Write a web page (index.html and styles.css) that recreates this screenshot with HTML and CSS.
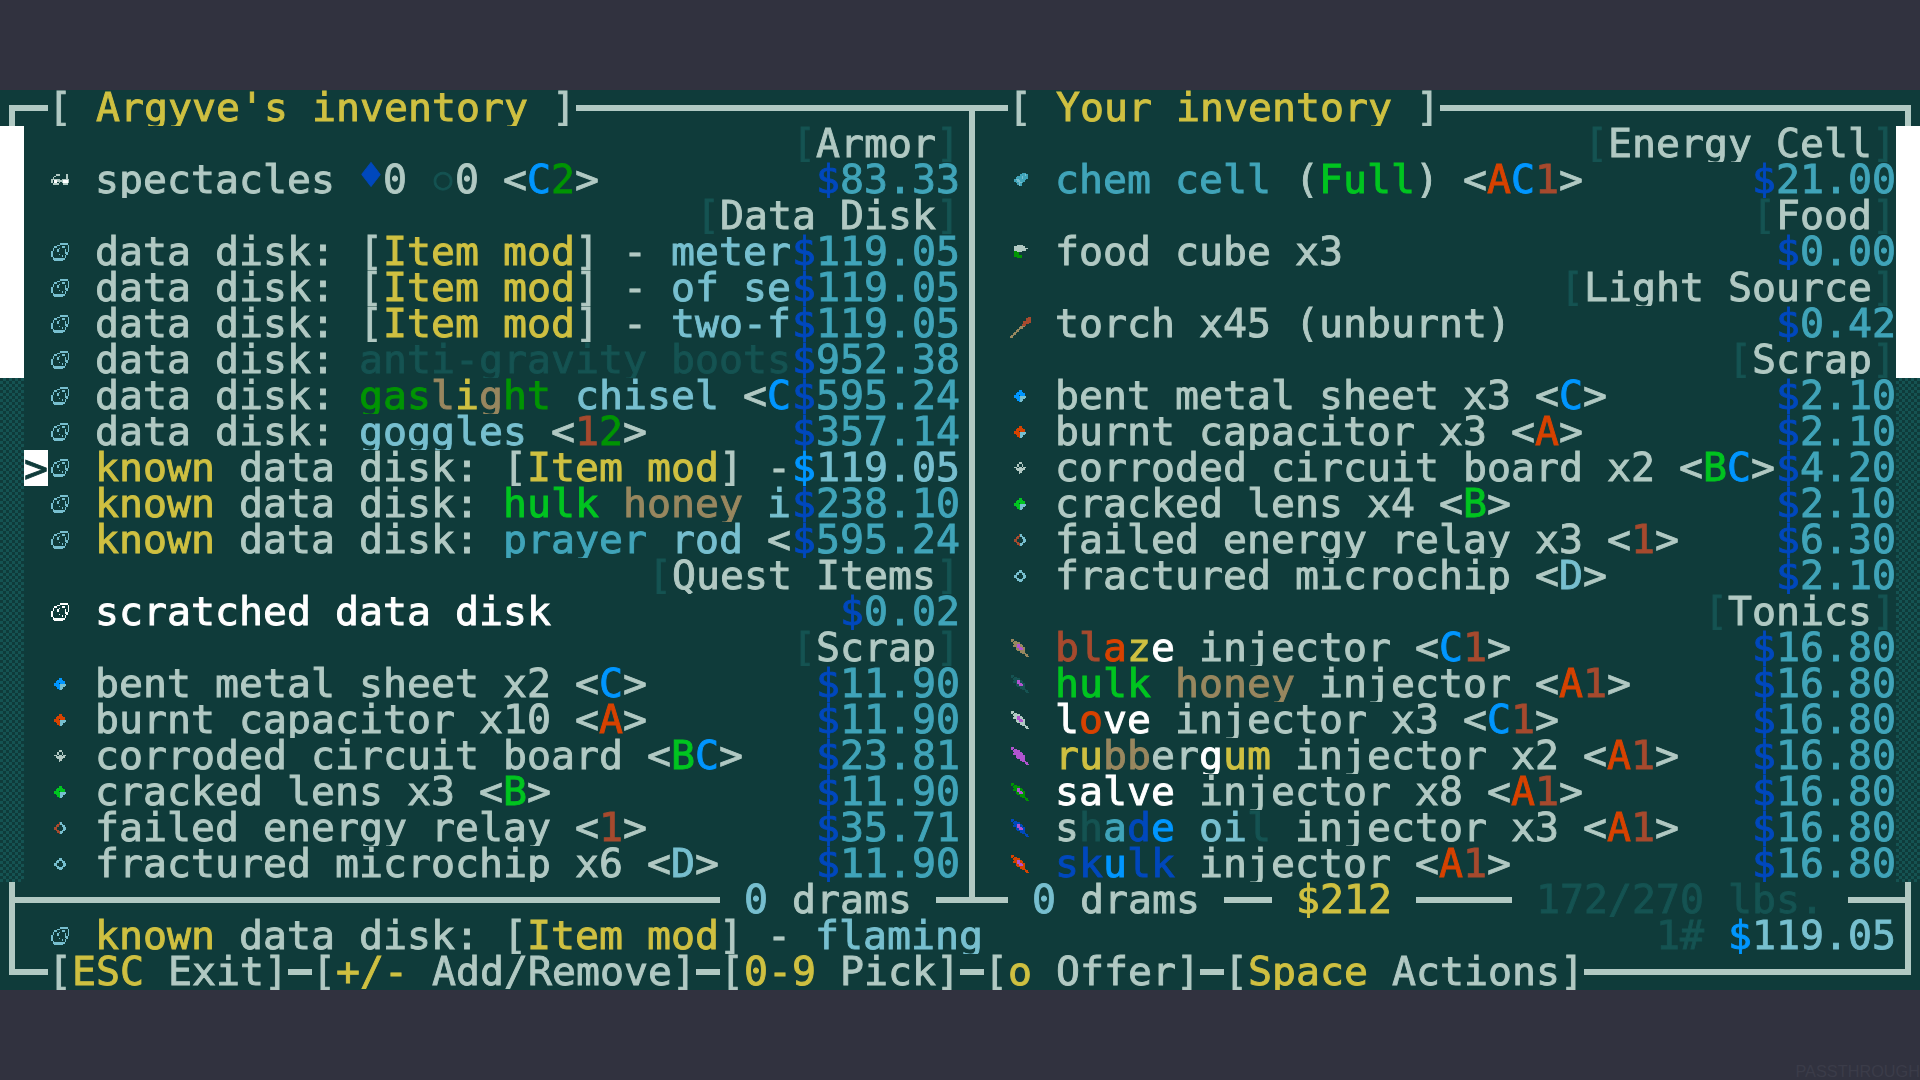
FILE: index.html
```html
<!DOCTYPE html>
<html lang="en">
<head>
    <meta charset="UTF-8">
    <title>Trade</title>
    <link rel="stylesheet" href="styles.css">
</head>
<body>
    <svg class="defs" width="0" height="0">
        <defs>
            <g id="specs">
                <path fill="#b1c9c3" d="M5 8h3v1H5z M12 8h1v3h-1z M4 9h1v1H4z M3 10h1v1H3z M2 11h6v1H2z M9 11h5v1H9z M2 12h1v2H2z M6 12h4v1H6z M13 12h1v2h-1z M7 13h1v1H7z M9 13h1v1H9z M3 14h4v1H3z M10 14h3v1h-3z"/>
                <path fill="#fff" d="M4 12h2v2H4z M10 12h3v2h-3z"/>
            </g>
            <path id="disk" fill="currentColor" d="M8 6h5v1H8z M6 7h2v1H6z M13 7h1v5h-1z M4 8h2v1H4z M9 8h2v1H9z M3 9h1v2H3z M7 9h1v1H7z M6 10h1v2H6z M11 10h1v3h-1z M12 12h1v2h-1z M2 11h1v4H2z M7 13h1v1H7z M9 14h1v1H9z M11 14h1v2h-1z M3 15h1v1H3z M3 16h8v1H3z M4 17h6v1H4z"/>
            <g id="chip">
                <path fill="currentColor" d="M7 8h2v1H7z M6 9h4v1H6z M5 10h6v1H5z M4 11h3v1H4z M8 11h3v1H8z M4 12h4v1H4z M5 13h3v1H5z M6 14h2v1H6z M7 15h1v1H7z"/>
                <path fill="#77bfcf" d="M8 12h4v1H8z M8 13h3v1H8z M8 14h2v1H8z M8 15h1v1H8z"/>
            </g>
            <g id="relay">
                <path fill="currentColor" d="M7 8h1v1H7z M6 9h2v1H6z M5 10h2v1H5z M4 11h2v2H4z M5 13h2v1H5z M6 14h2v1H6z M7 15h1v1H7z"/>
                <path fill="#77bfcf" d="M8 8h1v1H8z M8 9h2v1H8z M9 10h2v1H9z M10 11h2v2h-2z M9 13h2v1H9z M8 14h2v1H8z M8 15h1v1H8z"/>
            </g>
            <path id="circuit" fill="currentColor" d="M7 8h2v1H7z M6 9h1v2H6z M9 9h1v2H9z M7 11h2v1H7z M4 11h2v1H4z M10 11h2v1h-2z M5 12h2v1H5z M9 12h2v1H9z M7 12h2v3H7z M6 13h1v1H6z M9 13h1v1H9z M7 15h1v1H7z"/>
            <g id="cell">
                <path fill="#40a4b9" d="M9 7h3v1H9z M8 8h5v1H8z M6 9h7v1H6z M5 10h8v1H5z M4 11h8v1H4z M4 12h7v1H4z M5 13h5v1H5z M6 14h3v1H6z M7 15h2v1H7z"/>
                <path fill="#77bfcf" d="M5 11h2v1H5z M6 12h2v1H6z M7 13h2v1H7z M7 14h1v2H7z M9 9h1v2H9z M11 8h1v1h-1z"/>
            </g>
            <g id="food">
                <path fill="#b1c9c3" d="M6 7h4v1H6z M4 8h7v1H4z M4 9h9v1H4z M4 10h8v1H4z M6 11h3v1H6z"/>
                <path fill="#009403" d="M4 11h2v1H4z M4 12h3v2H4z M4 14h5v1H4z M6 15h3v1H6z"/>
            </g>
            <g id="torch">
                <path fill="#98875f" d="M1 20h2v1H1z M2 19h2v1H2z M3 18h2v1H3z M4 17h2v1H4z M5 16h2v1H5z M6 15h2v1H6z M7 14h3v1H7z M8 13h3v1H8z"/>
                <path fill="#a64a2e" d="M9 12h3v1H9z M10 11h4v1h-4z M10 10h5v1h-5z M12 9h3v1h-3z M12 8h3v1h-3z M13 7h2v1h-2z"/>
            </g>
            <g id="injector">
                <path fill="currentColor" d="M2 6h2v1H2z M2 7h1v1H2z M4 7h2v1H4z M3 8h5v1H3z M4 9h2v1H4z M8 9h1v1H8z M3 10h3v1H3z M8 10h2v1H8z M5 11h1v1H5z M9 11h2v1H9z M5 12h2v1H5z M10 12h1v1h-1z M6 13h5v1H6z M8 14h3v1H8z M9 15h3v1H9z M11 16h2v1h-2z M12 17h2v1h-2z"/>
                <path fill="#b154cf" d="M6 9h2v1H6z M6 10h2v1H6z M6 11h3v1H6z M7 12h3v1H7z"/>
            </g>
        </defs>
    </svg>

    <main class="screen">
        <div class="row">
            <i class="box tl"></i><i class="rule w1"></i>
            <div class="label">[ <span class="gold">Argyve's inventory</span> ]</div>
            <i class="rule w16"></i><i class="box tee"></i><i class="rule w1"></i>
            <div class="label">[ <span class="gold">Your inventory</span> ]</div>
            <i class="rule grow"></i><i class="box tr"></i>
        </div>

        <div class="panes">
            <div class="scroll"><div class="thumb"></div></div>

            <section class="list">
                <div class="row cat"><div class="label"><span class="dim">[</span>Armor<span class="dim">]</span></div></div>
                <div class="row"><i class="slot"></i><svg class="icon" viewBox="0 0 16 24"><use href="#specs"/></svg><div class="name">spectacles <span class="armor blue">♦</span>0 <span class="armor ring dim">○</span>0 &lt;<span class="sky">C</span><span class="green-d">2</span>&gt;</div><div class="price"><span class="blue">$</span>83.33</div></div>
                <div class="row cat"><div class="label"><span class="dim">[</span>Data Disk<span class="dim">]</span></div></div>
                <div class="row"><i class="slot"></i><svg class="icon cyan" viewBox="0 0 16 24"><use href="#disk"/></svg><div class="name">data disk: [<span class="gold">Item mod</span>] - <span class="cyan">meter</span></div><div class="price"><span class="blue">$</span>119.05</div></div>
                <div class="row"><i class="slot"></i><svg class="icon cyan" viewBox="0 0 16 24"><use href="#disk"/></svg><div class="name">data disk: [<span class="gold">Item mod</span>] - <span class="cyan">of se</span></div><div class="price"><span class="blue">$</span>119.05</div></div>
                <div class="row"><i class="slot"></i><svg class="icon cyan" viewBox="0 0 16 24"><use href="#disk"/></svg><div class="name">data disk: [<span class="gold">Item mod</span>] - <span class="cyan">two-f</span></div><div class="price"><span class="blue">$</span>119.05</div></div>
                <div class="row"><i class="slot"></i><svg class="icon cyan" viewBox="0 0 16 24"><use href="#disk"/></svg><div class="name">data disk: <span class="dim">anti-gravity boots</span></div><div class="price"><span class="blue">$</span>952.38</div></div>
                <div class="row"><i class="slot"></i><svg class="icon cyan" viewBox="0 0 16 24"><use href="#disk"/></svg><div class="name">data disk: <span class="green-d">gas</span><span class="tan">l</span><span class="gold">i</span><span class="tan">g</span><span class="green-d">ht</span> <span class="cyan">chisel</span> &lt;<span class="sky">C</span></div><div class="price"><span class="blue">$</span>595.24</div></div>
                <div class="row"><i class="slot"></i><svg class="icon cyan" viewBox="0 0 16 24"><use href="#disk"/></svg><div class="name">data disk: <span class="cyan">goggles</span> &lt;<span class="rust">1</span><span class="green-d">2</span>&gt;</div><div class="price"><span class="blue">$</span>357.14</div></div>
                <div class="row"><i class="slot cursor">&gt;</i><svg class="icon cyan" viewBox="0 0 16 24"><use href="#disk"/></svg><div class="name"><span class="gold">known</span> data disk: [<span class="gold">Item mod</span>] -</div><div class="price active"><span class="sky">$</span>119.05</div></div>
                <div class="row"><i class="slot"></i><svg class="icon cyan" viewBox="0 0 16 24"><use href="#disk"/></svg><div class="name"><span class="gold">known</span> data disk: <span class="green">hulk</span> <span class="tan">honey</span> <span class="cyan">i</span></div><div class="price"><span class="blue">$</span>238.10</div></div>
                <div class="row"><i class="slot"></i><svg class="icon cyan" viewBox="0 0 16 24"><use href="#disk"/></svg><div class="name"><span class="gold">known</span> data disk: <span class="teal">prayer</span> <span class="cyan">rod</span> &lt;</div><div class="price"><span class="blue">$</span>595.24</div></div>
                <div class="row cat"><div class="label"><span class="dim">[</span>Quest Items<span class="dim">]</span></div></div>
                <div class="row"><i class="slot"></i><svg class="icon white" viewBox="0 0 16 24"><use href="#disk"/></svg><div class="name white">scratched data disk</div><div class="price"><span class="blue">$</span>0.02</div></div>
                <div class="row cat"><div class="label"><span class="dim">[</span>Scrap<span class="dim">]</span></div></div>
                <div class="row"><i class="slot"></i><svg class="icon sky" viewBox="0 0 16 24"><use href="#chip"/></svg><div class="name">bent metal sheet x2 &lt;<span class="sky">C</span>&gt;</div><div class="price"><span class="blue">$</span>11.90</div></div>
                <div class="row"><i class="slot"></i><svg class="icon red" viewBox="0 0 16 24"><use href="#chip"/></svg><div class="name">burnt capacitor x10 &lt;<span class="red">A</span>&gt;</div><div class="price"><span class="blue">$</span>11.90</div></div>
                <div class="row"><i class="slot"></i><svg class="icon grey" viewBox="0 0 16 24"><use href="#circuit"/></svg><div class="name">corroded circuit board &lt;<span class="green">B</span><span class="sky">C</span>&gt;</div><div class="price"><span class="blue">$</span>23.81</div></div>
                <div class="row"><i class="slot"></i><svg class="icon green" viewBox="0 0 16 24"><use href="#chip"/></svg><div class="name">cracked lens x3 &lt;<span class="green">B</span>&gt;</div><div class="price"><span class="blue">$</span>11.90</div></div>
                <div class="row"><i class="slot"></i><svg class="icon rust" viewBox="0 0 16 24"><use href="#relay"/></svg><div class="name">failed energy relay &lt;<span class="rust">1</span>&gt;</div><div class="price"><span class="blue">$</span>35.71</div></div>
                <div class="row"><i class="slot"></i><svg class="icon cyan" viewBox="0 0 16 24"><use href="#relay"/></svg><div class="name">fractured microchip x6 &lt;<span class="cyan">D</span>&gt;</div><div class="price"><span class="blue">$</span>11.90</div></div>
            </section>

            <div class="divider"></div>

            <section class="list">
                <div class="row cat"><div class="label"><span class="dim">[</span>Energy Cell<span class="dim">]</span></div></div>
                <div class="row"><i class="slot"></i><svg class="icon" viewBox="0 0 16 24"><use href="#cell"/></svg><div class="name"><span class="teal">chem cell</span> (<span class="green">Full</span>) &lt;<span class="red">A</span><span class="sky">C</span><span class="rust">1</span>&gt;</div><div class="price"><span class="blue">$</span>21.00</div></div>
                <div class="row cat"><div class="label"><span class="dim">[</span>Food<span class="dim">]</span></div></div>
                <div class="row"><i class="slot"></i><svg class="icon" viewBox="0 0 16 24"><use href="#food"/></svg><div class="name">food cube x3</div><div class="price"><span class="blue">$</span>0.00</div></div>
                <div class="row cat"><div class="label"><span class="dim">[</span>Light Source<span class="dim">]</span></div></div>
                <div class="row"><i class="slot"></i><svg class="icon" viewBox="0 0 16 24"><use href="#torch"/></svg><div class="name">torch x45 (unburnt)</div><div class="price"><span class="blue">$</span>0.42</div></div>
                <div class="row cat"><div class="label"><span class="dim">[</span>Scrap<span class="dim">]</span></div></div>
                <div class="row"><i class="slot"></i><svg class="icon sky" viewBox="0 0 16 24"><use href="#chip"/></svg><div class="name">bent metal sheet x3 &lt;<span class="sky">C</span>&gt;</div><div class="price"><span class="blue">$</span>2.10</div></div>
                <div class="row"><i class="slot"></i><svg class="icon red" viewBox="0 0 16 24"><use href="#chip"/></svg><div class="name">burnt capacitor x3 &lt;<span class="red">A</span>&gt;</div><div class="price"><span class="blue">$</span>2.10</div></div>
                <div class="row"><i class="slot"></i><svg class="icon grey" viewBox="0 0 16 24"><use href="#circuit"/></svg><div class="name">corroded circuit board x2 &lt;<span class="green">B</span><span class="sky">C</span>&gt;</div><div class="price"><span class="blue">$</span>4.20</div></div>
                <div class="row"><i class="slot"></i><svg class="icon green" viewBox="0 0 16 24"><use href="#chip"/></svg><div class="name">cracked lens x4 &lt;<span class="green">B</span>&gt;</div><div class="price"><span class="blue">$</span>2.10</div></div>
                <div class="row"><i class="slot"></i><svg class="icon rust" viewBox="0 0 16 24"><use href="#relay"/></svg><div class="name">failed energy relay x3 &lt;<span class="rust">1</span>&gt;</div><div class="price"><span class="blue">$</span>6.30</div></div>
                <div class="row"><i class="slot"></i><svg class="icon cyan" viewBox="0 0 16 24"><use href="#relay"/></svg><div class="name">fractured microchip &lt;<span class="cyan">D</span>&gt;</div><div class="price"><span class="blue">$</span>2.10</div></div>
                <div class="row cat"><div class="label"><span class="dim">[</span>Tonics<span class="dim">]</span></div></div>
                <div class="row"><i class="slot"></i><svg class="icon tan" viewBox="0 0 16 24"><use href="#injector"/></svg><div class="name"><span class="rust">bl</span><span class="red">a</span><span class="gold">z</span><span class="white">e</span> injector &lt;<span class="sky">C</span><span class="rust">1</span>&gt;</div><div class="price"><span class="blue">$</span>16.80</div></div>
                <div class="row"><i class="slot"></i><svg class="icon dim" viewBox="0 0 16 24"><use href="#injector"/></svg><div class="name"><span class="green">hulk</span> <span class="tan">honey</span> injector &lt;<span class="red">A</span><span class="rust">1</span>&gt;</div><div class="price"><span class="blue">$</span>16.80</div></div>
                <div class="row"><i class="slot"></i><svg class="icon grey" viewBox="0 0 16 24"><use href="#injector"/></svg><div class="name"><span class="white">l</span><span class="red">o</span><span class="white">ve</span> injector x3 &lt;<span class="sky">C</span><span class="rust">1</span>&gt;</div><div class="price"><span class="blue">$</span>16.80</div></div>
                <div class="row"><i class="slot"></i><svg class="icon purple" viewBox="0 0 16 24"><use href="#injector"/></svg><div class="name"><span class="gold">ru</span><span class="tan">bb</span>er<span class="white">g</span><span class="gold">um</span> injector x2 &lt;<span class="red">A</span><span class="rust">1</span>&gt;</div><div class="price"><span class="blue">$</span>16.80</div></div>
                <div class="row"><i class="slot"></i><svg class="icon green-d" viewBox="0 0 16 24"><use href="#injector"/></svg><div class="name"><span class="white">salve</span> injector x8 &lt;<span class="red">A</span><span class="rust">1</span>&gt;</div><div class="price"><span class="blue">$</span>16.80</div></div>
                <div class="row"><i class="slot"></i><svg class="icon blue" viewBox="0 0 16 24"><use href="#injector"/></svg><div class="name">s<span class="dim">h</span><span class="teal">a</span><span class="blue">d</span><span class="sky">e</span> <span class="cyan">oi</span><span class="dim">l</span> injector x3 &lt;<span class="red">A</span><span class="rust">1</span>&gt;</div><div class="price"><span class="blue">$</span>16.80</div></div>
                <div class="row"><i class="slot"></i><svg class="icon red" viewBox="0 0 16 24"><use href="#injector"/></svg><div class="name"><span class="blue">sk</span><span class="sky">u</span><span class="blue">lk</span> injector &lt;<span class="red">A</span><span class="rust">1</span>&gt;</div><div class="price"><span class="blue">$</span>16.80</div></div>
            </section>

            <div class="scroll"><div class="thumb"></div></div>
        </div>

        <div class="row">
            <i class="box tee-right"></i><i class="rule w29"></i>
            <div class="label"> <span class="cyan">0</span> drams </div>
            <i class="rule w1"></i><i class="box tee-up"></i><i class="rule w1"></i>
            <div class="label"> <span class="cyan">0</span> drams </div>
            <i class="rule w2"></i>
            <div class="label gold"> $212 </div>
            <i class="rule w4"></i>
            <div class="label dim"> 172/270 lbs. </div>
            <i class="rule w2"></i><i class="box tee-left"></i>
        </div>

        <div class="row">
            <i class="box v"></i><i class="slot"></i><svg class="icon cyan" viewBox="0 0 16 24"><use href="#disk"/></svg>
            <div class="name"><span class="gold">known</span> data disk: [<span class="gold">Item mod</span>] - <span class="cyan">flaming</span></div>
            <div class="price active"><span class="dim">1#</span> <span class="sky">$</span>119.05</div>
            <i class="box v"></i>
        </div>

        <div class="row">
            <i class="box bl"></i><i class="rule w1"></i>
            <div class="label">[<span class="gold">ESC</span> Exit]</div><i class="rule w1"></i>
            <div class="label">[<span class="gold">+/-</span> Add/Remove]</div><i class="rule w1"></i>
            <div class="label">[<span class="gold">0-9</span> Pick]</div><i class="rule w1"></i>
            <div class="label">[<span class="gold">o</span> Offer]</div><i class="rule w1"></i>
            <div class="label">[<span class="gold">Space</span> Actions]</div>
            <i class="rule grow"></i><i class="box br"></i>
        </div>
    </main>

    <footer class="mode">PASSTHROUGH</footer>
</body>
</html>
```

FILE: styles.css
```css
:root {
    --bg: #0f3b3a;
    --line: #b1c9c3;
}

body {
    margin: 0;
    height: 1080px;
    overflow: hidden;
    background-color: #31323f;
}

.defs {
    display: block;
    height: 0;
}

.screen {
    width: 1920px;
    height: 900px;
    margin-top: 90px;
    overflow: hidden;
    background-color: var(--bg);
    color: var(--line);
    font-family: "DejaVu Sans Mono", monospace;
    font-size: 39.87px;
    line-height: 34px;
    -webkit-text-stroke: 0.9px currentColor;
}

.row {
    display: flex;
    height: 36px;
    overflow: hidden;
    white-space: pre;
}

.cat {
    justify-content: flex-end;
}

.panes {
    display: grid;
    grid-template-columns: 24px 936px 24px 912px 24px;
    height: 756px;
}

.scroll {
    background: repeating-conic-gradient(#155352 0 25%, var(--bg) 0 50%) 0 0 / 6px 6px;
}

.thumb {
    height: 252px;
    background-color: #fff;
}

.divider {
    justify-self: center;
    width: 6px;
    background-color: var(--line);
}

/* one cell wide pieces of the box frame */
.box {
    flex: none;
    width: 24px;
    height: 36px;
    --stroke: linear-gradient(var(--line), var(--line));
    background-image: var(--stroke), var(--stroke);
    background-repeat: no-repeat;
}

.tl {
    background-size: 15px 6px, 6px 21px;
    background-position: 9px 15px, 9px 15px;
}

.tr {
    background-size: 15px 6px, 6px 21px;
    background-position: 0 15px, 9px 15px;
}

.bl {
    background-size: 15px 6px, 6px 21px;
    background-position: 9px 15px, 9px 0;
}

.br {
    background-size: 15px 6px, 6px 21px;
    background-position: 0 15px, 9px 0;
}

.tee {
    background-size: 100% 6px, 6px 21px;
    background-position: 0 15px, 9px 15px;
}

.tee-up {
    background-size: 100% 6px, 6px 21px;
    background-position: 0 15px, 9px 0;
}

.tee-right {
    background-size: 15px 6px, 6px 36px;
    background-position: 9px 15px, 9px 0;
}

.tee-left {
    background-size: 15px 6px, 6px 36px;
    background-position: 0 15px, 9px 0;
}

.v {
    background-size: 0 0, 6px 36px;
    background-position: 0 0, 9px 0;
}

.rule {
    flex: none;
    height: 6px;
    margin-top: 15px;
    background-color: var(--line);
}

.grow {
    flex: 1;
}

.w1 { width: 24px; }
.w2 { width: 48px; }
.w4 { width: 96px; }
.w16 { width: 384px; }
.w29 { width: 696px; }

.slot {
    flex: none;
    width: 24px;
    font-style: normal;
}

.cursor {
    background-color: #fff;
    color: var(--bg);
    line-height: 36px;
}

.icon {
    flex: none;
    width: 24px;
    height: 36px;
    margin-right: 24px;
    shape-rendering: crispEdges;
}

.label,
.name,
.price,
.cursor {
    filter: blur(0.5px);
}

.name {
    flex: 1;
    min-width: 0;
    margin-left: -1px;
    overflow: hidden;
}

.price {
    flex: none;
    color: #40a4b9;
}

.active {
    color: #77bfcf;
}

/* the armor and dodge marks sit high in their cell */
.armor {
    line-height: 0;
    vertical-align: 4px;
}

.ring {
    display: inline-block;
    width: 24px;
    text-align: center;
    font-size: 30px;
}

.gold { color: #cfc041; }
.grey { color: #b1c9c3; }
.white { color: #fff; }
.dim { color: #155352; }
.tan { color: #98875f; }
.blue { color: #0048bd; }
.sky { color: #0096ff; }
.teal { color: #40a4b9; }
.cyan { color: #77bfcf; }
.green { color: #00c420; }
.green-d { color: #009403; }
.red { color: #d74200; }
.rust { color: #a64a2e; }
.purple { color: #b154cf; }

.mode {
    margin-top: 71px;
    text-align: right;
    font-family: "Liberation Sans", sans-serif;
    font-size: 16.3px;
    line-height: 20px;
    color: #3b3c49;
}
```
